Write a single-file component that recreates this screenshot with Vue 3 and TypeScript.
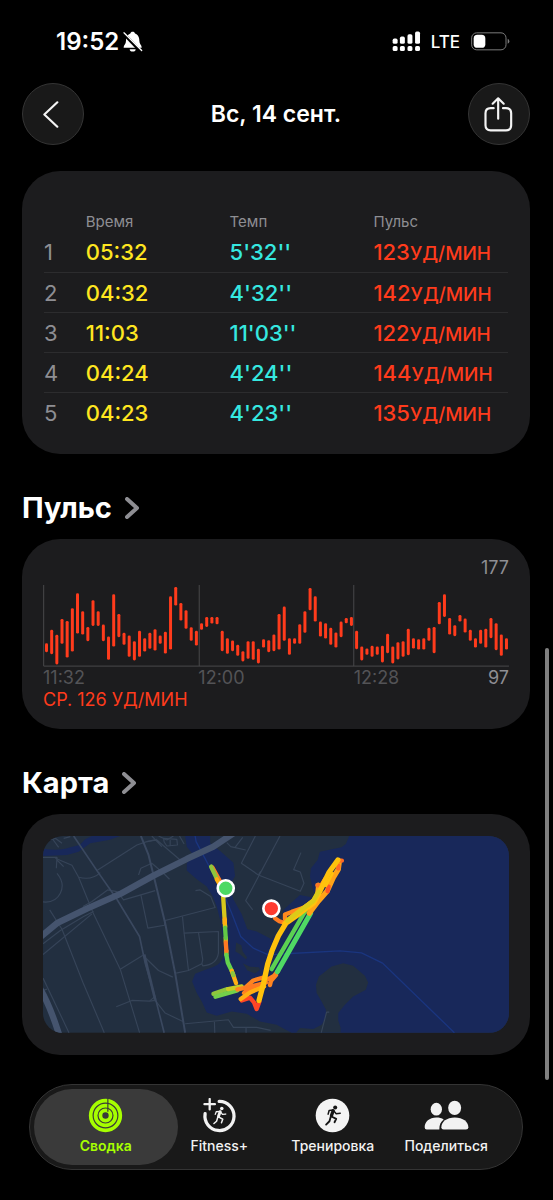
<script setup lang="ts">
interface Split {
  time: string
  pace: string
  pulse: number
}

const splits: Split[] = [
  { time: '05:32', pace: "5'32''", pulse: 123 },
  { time: '04:32', pace: "4'32''", pulse: 142 },
  { time: '11:03', pace: "11'03''", pulse: 122 },
  { time: '04:24', pace: "4'24''", pulse: 144 },
  { time: '04:23', pace: "4'23''", pulse: 135 },
]

// Upper and lower end of each heart rate bar, in chart units.
const ranges: [number, number][] = [
  [490, 517], [450, 523], [465, 554], [417, 492], [423, 533], [385, 515],
  [340, 461], [394, 464], [441, 484], [361, 438], [394, 438], [434, 484],
  [470, 540], [343, 500], [402, 472], [459, 495], [467, 531], [484, 542],
  [453, 531], [475, 515], [459, 507], [448, 512], [467, 492], [456, 521],
  [349, 509], [321, 377], [369, 422], [391, 447], [442, 483], [453, 497],
  [430, 450], [411, 441], [411, 431], [411, 433], [453, 514], [475, 522],
  [482, 514], [495, 528], [514, 545], [484, 537], [484, 540], [507, 551],
  [478, 503], [481, 517], [464, 514], [402, 509], [380, 483], [475, 525],
  [475, 492], [433, 492], [394, 459], [324, 391], [349, 425], [425, 470],
  [430, 476], [444, 495], [458, 503], [425, 472], [414, 430], [411, 438],
  [453, 508], [500, 542], [506, 525], [498, 531], [500, 525], [498, 548],
  [462, 520], [500, 551], [487, 539], [484, 531], [447, 526], [475, 506],
  [478, 509], [475, 509], [444, 483], [441, 520], [366, 433], [343, 411],
  [414, 464], [436, 469], [405, 425], [416, 458], [450, 483], [475, 503],
  [450, 492], [447, 503], [414, 475], [430, 511], [464, 528], [475, 509],
]

const barX = (i: number): number => 72 + i * 15.55

const minorRoads: string[] = [
  'M230 332L350 255L380 245L410 238',
  'M105 295L155 316L175 352L218 458L300 628L358 819',
  'M68 292L110 292L108 325M110 300L130 320',
  'M110 340Q135 370 120 400T68 426',
  'M88 450L125 508L188 668L252 819',
  'M68 552L120 512L190 470L220 455',
  'M68 584L215 462',
  'M175 352Q215 362 240 338',
  'M300 628L372 584',
  'M68 655L146 819M68 692L80 688',
  'M288 741L335 722L388 724L402 712',
  'M378 596L415 632L458 652',
  'M388 724L405 722L435 760L490 786',
  'M405 392L362 405L383 505L433 496L435 482L585 443L572 410L540 390L526 392',
  'M362 405L310 420L290 395L262 390L215 425L188 440',
  'M487 470L492 520L595 515L595 580Q590 615 548 618L545 612',
  'M492 520L505 632M535 518L548 600L545 612L505 632L468 640',
  'M495 792L625 780L640 803L710 803L752 812',
  'M583 786L584 819M678 804V819',
  'M355 345L362 325L395 310L430 340L448 358',
  'M380 245L410 240L480 300M395 228L425 260M430 235L470 238L472 255L440 258L432 246Z',
  'M478 228L492 252M415 228L440 240L460 228M450 240V258',
  'M75 242L105 235L125 250M90 228L115 262M130 235L150 230',
  'M620 248L632 260L677 270M645 262L668 232M706 228L664 310L715 345L841 394L852 370L841 336L821 329L843 278',
  'M780 228L677 422L698 450M715 345L722 334',
  'M904 819L920 757L928 757',
]

interface Tab {
  id: 'summary' | 'fitness' | 'workout' | 'sharing'
  label: string
}

const tabs: Tab[] = [
  { id: 'summary', label: 'Сводка' },
  { id: 'fitness', label: 'Fitness+' },
  { id: 'workout', label: 'Тренировка' },
  { id: 'sharing', label: 'Поделиться' },
]
</script>

<template>
  <div class="screen">
    <div class="status">
      <div class="status-side">
        <span class="clock">19:52</span>
        <svg class="bell" viewBox="326 34 60 62" aria-hidden="true">
          <path d="M355 36c-4 0-6 2-7 5-10 4-13 12-13 22 0 10-7 14-7 19 0 2 1 2 3 2h48c2 0 3 0 3-2 0-5-7-9-7-19 0-10-3-18-13-22-1-3-3-5-7-5z" fill="#fff" />
          <path d="M346 88a9 7 0 0 0 18 0z" fill="#fff" />
          <path d="M324 37L380 96" stroke="#000" stroke-width="10" />
          <path d="M329 39L382 92" stroke="#fff" stroke-width="4" stroke-linecap="round" />
        </svg>
      </div>
      <div class="status-side">
        <svg class="signal" viewBox="38 32 88 62" fill="#fff" aria-hidden="true">
          <rect x="40" y="54" width="15" height="16" rx="5" />
          <rect x="62" y="48" width="15" height="22" rx="5" />
          <rect x="85" y="41" width="15" height="29" rx="5" />
          <rect x="108" y="33" width="15" height="37" rx="5" />
          <rect x="40" y="77" width="15" height="15" rx="5" />
          <rect x="62" y="77" width="15" height="15" rx="5" />
          <rect x="85" y="77" width="15" height="15" rx="5" />
          <rect x="108" y="77" width="15" height="15" rx="5" />
        </svg>
        <span class="network">LTE</span>
        <svg class="battery" viewBox="272 36 117 56" aria-hidden="true">
          <rect x="274" y="38" width="103" height="51" rx="15" fill="none" stroke="#7b7b7b" stroke-width="3" />
          <rect x="280" y="44" width="35" height="39" rx="11" fill="#fff" />
          <path d="M382 56q5 2 5 7.500t-5 7.500z" fill="#7b7b7b" />
        </svg>
      </div>
    </div>

    <header class="top">
      <button class="round" type="button" aria-label="Назад">
        <svg class="back-icon" viewBox="83 243 48 81" aria-hidden="true">
          <path d="M126 247L87 283.500L126 320" fill="none" stroke="#f4f4f4" stroke-width="6.500" stroke-linecap="round" stroke-linejoin="round" />
        </svg>
      </button>
      <h1>Вс, 14 сент.</h1>
      <button class="round" type="button" aria-label="Поделиться">
        <svg class="share-icon" viewBox="314 230 87 105" fill="none" stroke="#f4f4f4" stroke-width="6.500" stroke-linecap="round" stroke-linejoin="round" aria-hidden="true">
          <path d="M343 263.500H334Q318.500 263.500 318.500 279V315Q318.500 330 334 330H380Q395.500 330 395.500 315V279Q395.500 263.500 380 263.500H371" />
          <path d="M356.500 295V235M340 250L356.500 234L373 250" />
        </svg>
      </button>
    </header>

    <main>
      <section class="card splits-card">
        <table class="splits">
          <colgroup>
            <col class="col-index" />
            <col class="col-value" />
            <col class="col-value" />
            <col />
          </colgroup>
          <thead>
            <tr>
              <td></td>
              <th scope="col">Время</th>
              <th scope="col">Темп</th>
              <th scope="col">Пульс</th>
            </tr>
          </thead>
          <tbody>
            <tr v-for="(split, i) in splits" :key="i">
              <th scope="row">{{ i + 1 }}</th>
              <td class="time">{{ split.time }}</td>
              <td class="pace">{{ split.pace }}</td>
              <td class="pulse">{{ split.pulse }}<span class="unit">уд/мин</span></td>
            </tr>
          </tbody>
        </table>
      </section>

      <h2>
        <a href="#pulse">Пульс
          <svg class="chevron" viewBox="0 0 14 22" aria-hidden="true"><path d="M2 2L12 11L2 20" /></svg>
        </a>
      </h2>
      <section id="pulse" class="card pulse-card">
        <p class="max">177</p>
        <svg class="chart" viewBox="66 315 1402 247" role="img" aria-label="Пульс">
          <path d="M68 315V559H1468M536 315V559M1001 315V559" fill="none" stroke="#48484a" stroke-width="3" />
          <rect
            v-for="([top, bottom], i) in ranges"
            :key="i"
            :x="barX(i)"
            :y="top"
            width="9"
            :height="bottom - top"
            rx="4"
            fill="#ff3b1c"
          />
        </svg>
        <div class="axis">
          <span>11:32</span>
          <span>12:00</span>
          <span class="axis-last">12:28 <span class="min">97</span></span>
        </div>
        <p class="average">СР. 126 УД/МИН</p>
      </section>

      <h2>
        <a href="#map">Карта
          <svg class="chevron" viewBox="0 0 14 22" aria-hidden="true"><path d="M2 2L12 11L2 20" /></svg>
        </a>
      </h2>
      <section id="map" class="card map-card">
        <svg class="map" viewBox="68 228 1400 591" role="img" aria-label="Карта">
          <rect x="68" y="228" width="1400" height="591" fill="#222f40" />
          <g fill="#18285a">
            <path d="M68 266Q120 274 150 262L178 255L195 238L215 228H300L265 240L210 250L175 275L140 285L68 288Z" />
            <path d="M495 228L500 260L520 285L500 310L500 332L530 358L560 380L578 410L590 440L600 480L612 550L608 595Q600 618 560 628L525 642L516 665L530 700L545 725L560 758L590 768L635 755L680 762L720 785L770 795L800 812L815 819H1468V228H988L978 252L965 262L900 275L893 300L873 325L870 350L880 392L890 415L840 405L815 428L790 450L785 498L755 538L710 515L682 508L665 463L640 418L628 378L645 348L640 308L600 273L570 250V228Z" />
          </g>
          <g fill="#222f40">
            <path d="M828 819L840 805L880 808L905 795L918 775L918 750L905 725L890 700L888 675L897 650L935 620L970 610L1000 618L1035 648L1045 668L1038 690L1000 710L975 735L955 760V782L962 803V819Z" />
            <path d="M648 548L664 556L668 575L681 592L678 599L658 582L646 575Z" />
            <path d="M668 610L690 621L717 622L720 630L705 641L682 632Z" />
          </g>
          <path d="M525 228L528 245L610 400L635 460L662 530L700 565L745 585L812 581L960 573L1025 579L1088 610L1304 819" fill="none" stroke="#1a357f" stroke-width="4" />
          <g fill="none" stroke="#364458" stroke-width="3.500" stroke-linejoin="round">
            <path v-for="road in minorRoads" :key="road" :d="road" />
          </g>
          <g fill="none" stroke="#3a485f" stroke-linejoin="round">
            <path d="M160 228L230 332L290 418L358 530L375 610L408 725L432 819" stroke-width="5" />
            <path d="M362 228L385 285L401 350L435 490L465 640L495 819" stroke-width="6" />
            <path d="M372 584L405 720" stroke-width="8" />
          </g>
          <g fill="none" stroke="#45546e" stroke-linejoin="round">
            <path d="M58 533L110 490L200 446L300 402L400 347L500 297L580 260L640 220" stroke-width="19" />
            <path d="M60 688Q90 740 118 830" stroke-width="19" />
          </g>
          <!-- Track, coloured by pace -->
          <g transform="translate(540 228)" fill="none" stroke-width="13" stroke-linecap="round" stroke-linejoin="round">
            <path d="M37 95L62 140" stroke="#ff7a22" />
            <path d="M33 92L52 132" stroke="#8fc63c" />
            <path d="M50 130L70 165" stroke="#ffae12" />
            <path d="M77 306L77 318M79 345L79 357M75 270V276" stroke="#d6c81c" />
            <path d="M69 178L75 272" stroke="#d6c81c" />
            <path d="M74 250V262" stroke="#ffae12" />
            <path d="M75 276L77 306" stroke="#62c845" />
            <path d="M77 320L79 345" stroke="#ff7a22" />
            <path d="M79 357L83 380L95 405" stroke="#62d24e" />
            <path d="M95 405L108 442" stroke="#ffae12" />
            <path d="M98 412L100 418" stroke="#8fc63c" />
            <path d="M40 474L82 460" stroke="#8fc63c" />
            <path d="M46 483L112 464" stroke="#73d04a" />
            <path d="M84 460L125 452" stroke="#c8cc25" />
            <path d="M125 494L150 486L162 500L170 520L178 498" stroke="#ff4526" />
            <path d="M112 461L135 456L160 434L190 425L205 430L222 420L234 405" stroke="#ff8420" />
            <path d="M132 472L158 455L198 440M210 448L213 435L228 418" stroke="#ff8420" />
            <path d="M138 459L180 448" stroke="#ff7a22" stroke-width="18" />
            <path d="M122 490L150 470L192 452" stroke="#ffae12" />
            <path d="M225 247L238 256L250 260" stroke="#ff7a22" />
            <path d="M255 250V236L275 228L315 214L345 190" stroke="#ff8a1e" />
            <path d="M252 262L290 230L340 195L352 175L355 146" stroke="#ffa318" />
            <path d="M352 148H364L375 130" stroke="#ff7a22" />
            <path d="M215 400L318 222" stroke="#5bd152" />
            <path d="M232 408L332 232" stroke="#4fd964" stroke-width="15" />
            <path d="M328 232L355 196L382 165L400 125L415 100L418 78" stroke="#ffa318" stroke-width="16" />
            <path d="M386 152L383 166" stroke="#ff5524" />
            <path d="M415 88V98M420 74L426 74" stroke="#ff6a24" />
            <path d="M177 494L190 445L203 385L216 345L235 300L258 262L300 232L342 200L360 165L388 108L414 72" stroke="#ffc20c" stroke-width="16" />
            <path d="M262 254L300 225L340 195L355 168" stroke="#dccb18" stroke-width="14" />
            <path d="M378 150L398 112" stroke="#ffc20c" stroke-width="8" />
          </g>
          <g stroke="#fff" stroke-width="8">
            <circle cx="617" cy="385" r="24" fill="#4cd964" />
            <circle cx="754" cy="446" r="24" fill="#ff3b30" />
          </g>
        </svg>
      </section>
    </main>

    <nav class="tabs" aria-label="Разделы">
      <button v-for="(tab, i) in tabs" :key="tab.id" type="button" class="tab" :class="{ active: i === 0 }">
        <svg v-if="tab.id === 'summary'" class="icon" viewBox="264 119 104 104" fill="none" aria-hidden="true">
          <g stroke="#a6ff00" stroke-width="11">
            <circle cx="316" cy="171" r="44" />
            <circle cx="316" cy="171" r="29.500" />
            <circle cx="316" cy="171" r="15" />
          </g>
          <path d="M323 119V160" stroke="#3a3a3a" stroke-width="3.500" />
        </svg>
        <svg v-else-if="tab.id === 'fitness'" class="icon" viewBox="605 116 104 107" fill="none" stroke="#f2f2f2" stroke-linecap="round" stroke-linejoin="round" aria-hidden="true">
          <path d="M656 126.500A44.500 44.500 0 1 1 613 164" stroke-width="10" />
          <path d="M611 135H643M627 119V151" stroke-width="7" />
          <circle cx="664" cy="148" r="5.500" fill="#f2f2f2" stroke="none" />
          <path d="M644 166L647 158L659 157L666 166L676 165" stroke-width="4" />
          <path d="M659 158L654 172" stroke-width="9" />
          <path d="M654 174L667 181L663 192M652 174L648 187L640 194" stroke-width="4.500" />
        </svg>
        <svg v-else-if="tab.id === 'workout'" class="icon" viewBox="127 119 104 104" fill="none" stroke="#161616" stroke-linecap="round" stroke-linejoin="round" aria-hidden="true">
          <circle cx="179" cy="171" r="50" fill="#f4f4f4" stroke="none" />
          <circle cx="187" cy="147" r="6" fill="#161616" stroke="none" />
          <path d="M166 167L169 156L181 155L190 166L202 164" stroke-width="4.500" />
          <path d="M181 157L176 171" stroke-width="10" />
          <path d="M176 174L190 181L185 191M174 174L170 188L160 198" stroke-width="5.500" />
        </svg>
        <svg v-else class="icon people" viewBox="452 119 135 104" fill="#f2f2f2" aria-hidden="true">
          <ellipse cx="489" cy="152" rx="17" ry="19" />
          <ellipse cx="544" cy="148" rx="19.500" ry="21.500" />
          <path d="M454 206C454 190 468 177 489 177C498 177 505 179 511 183C502 190 498 199 498 213H460Q454 213 454 206Z" />
          <path d="M504 206C504 190 520 177 544.500 177S585 190 585 206Q585 213 578 213H511Q504 213 504 206Z" />
        </svg>
        <span>{{ tab.label }}</span>
      </button>
    </nav>

    <div class="scrollbar" aria-hidden="true"></div>
  </div>
</template>

<style>
body {
  background: #000;
}
</style>

<style scoped>
.screen {
  box-sizing: border-box;
  min-height: 100vh;
  padding: 0 23px 30px 22px;
  background: #000;
  color: #fff;
  font-family: Inter, "Liberation Sans", sans-serif;
}

h1,
h2,
p {
  margin: 0;
}

button {
  padding: 0;
  color: inherit;
  font: inherit;
}

.status {
  display: flex;
  justify-content: space-between;
  height: 83px;
  box-sizing: border-box;
  padding: 0 20px 0 34px;
}

.status-side {
  display: flex;
  align-items: center;
  height: 83px;
}

.clock {
  font-size: 24px;
  font-weight: 600;
}

.bell {
  width: 20px;
  height: 21px;
  margin-left: 4px;
}

.signal {
  width: 29px;
  height: 21px;
}

.network {
  margin: 0 11px 0 10px;
  font-size: 17px;
  font-weight: 500;
}

.battery {
  width: 39px;
  height: 19px;
}

.top {
  display: flex;
  align-items: center;
  justify-content: space-between;
}

.round {
  display: flex;
  align-items: center;
  justify-content: center;
  box-sizing: border-box;
  width: 62px;
  height: 62px;
  border: 1px solid #343434;
  border-radius: 50%;
  background: #191919;
}

.back-icon {
  width: 16px;
  height: 27px;
  margin-right: 4px;
}

.share-icon {
  width: 29px;
  height: 35px;
}

h1 {
  font-size: 23px;
  font-weight: 600;
}

.card {
  border-radius: 38px;
  background: #1c1c1e;
}

.splits-card {
  margin-top: 26px;
  padding: 41px 22px 22px;
}

.splits {
  width: 100%;
  border-collapse: collapse;
  table-layout: fixed;
  font-size: 22px;
}

.col-index {
  width: 9%;
}

.col-value {
  width: 31%;
}

.splits td,
.splits th {
  height: 20px;
  padding: 0;
  text-align: left;
  font-weight: 400;
}

.splits thead th {
  color: #8e8e93;
  font-size: 15px;
  line-height: 20px;
}

.splits tbody th,
.splits tbody td {
  height: 40px;
  box-sizing: border-box;
  padding-top: 1px;
  line-height: 36px;
}

.splits tbody tr + tr {
  border-top: 1px solid #2c2c2e;
}

.splits tbody th {
  color: #8e8e93;
}

.splits tbody td {
  font-weight: 500;
}

.splits .time {
  color: #ffe620;
}

.splits .pace {
  color: #36e8e0;
}

.splits .pulse {
  color: #ff3b1c;
}

.unit {
  font-size: 19px;
  line-height: 20px;
  text-transform: uppercase;
}

h2 {
  margin: 34px 0 11px;
  font-size: 29px;
  font-weight: 700;
  line-height: 40px;
}

h2 a {
  display: inline-flex;
  align-items: center;
  gap: 13px;
  color: inherit;
  text-decoration: none;
}

.chevron {
  width: 14px;
  height: 22px;
  fill: none;
  stroke: #8e8e93;
  stroke-width: 4;
  stroke-linecap: round;
  stroke-linejoin: round;
}

.pulse-card {
  padding: 19px 21px 18px;
  font-size: 18px;
  line-height: 22px;
}

.max {
  line-height: 20px;
  color: #8e8e93;
  text-align: right;
}

.chart {
  display: block;
  width: 100%;
  margin-top: 7px;
}

.axis {
  display: grid;
  grid-template-columns: repeat(3, 1fr);
  color: #535356;
}

.axis-last {
  display: flex;
  justify-content: space-between;
}

.min {
  color: #8e8e93;
}

.average {
  color: #ff3b1c;
}

.map-card {
  padding: 22px 21px;
}

.map {
  display: block;
  width: 100%;
  border-radius: 20px;
}

.tabs {
  display: flex;
  box-sizing: border-box;
  margin: 29px 7px 0;
  padding: 0 19px;
  height: 86px;
  border: 1px solid #343434;
  border-radius: 43px;
  background: #191919;
}

.tab {
  position: relative;
  z-index: 0;
  display: flex;
  flex: 1 1 0;
  flex-direction: column;
  align-items: center;
  justify-content: center;
  gap: 3px;
  border: 0;
  background: none;
  color: #f2f2f2;
  font-size: 14px;
  font-weight: 500;
  line-height: 20px;
  white-space: nowrap;
}

.tab.active {
  color: #a6ff00;
  font-weight: 600;
}

.tab.active::before {
  position: absolute;
  z-index: -1;
  inset: 4px -15px;
  border-radius: 38px;
  background: #3a3a3a;
  content: "";
}

.icon {
  width: 35px;
  height: 35px;
}

.people {
  width: 45px;
}

.scrollbar {
  position: fixed;
  top: 54%;
  right: 4px;
  width: 4px;
  height: 36%;
  border-radius: 2px;
  background: #808080;
}
</style>
